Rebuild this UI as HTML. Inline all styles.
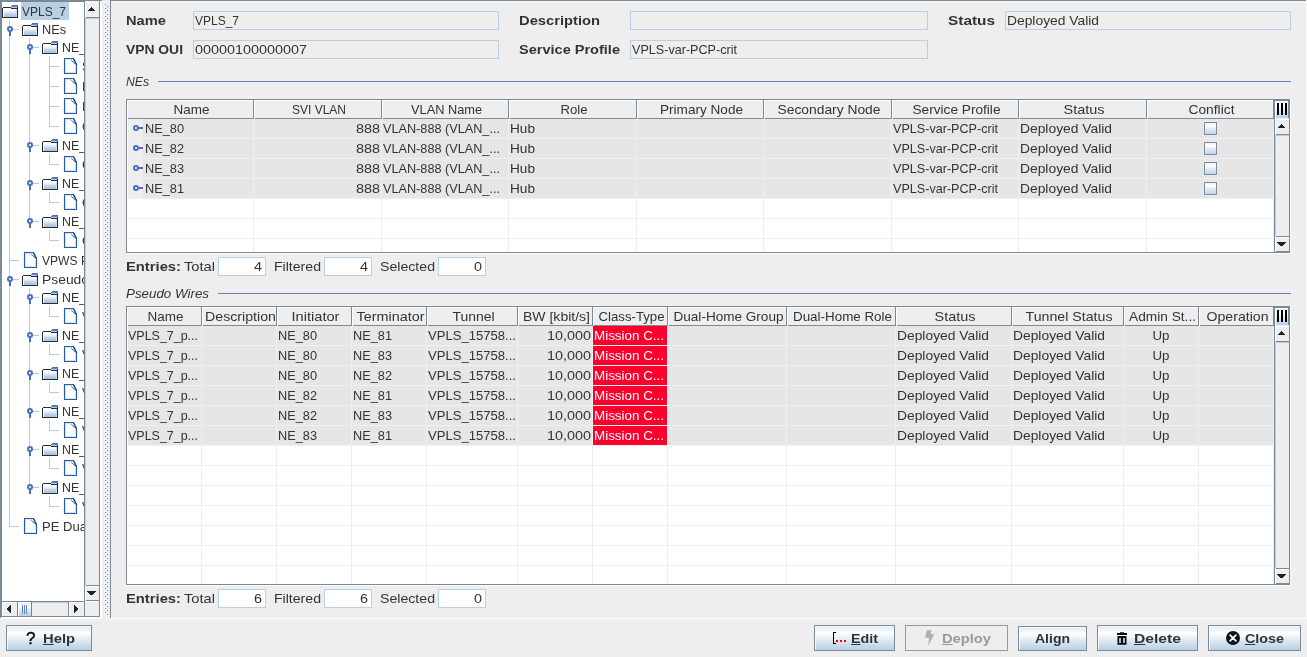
<!DOCTYPE html><html><head><meta charset="utf-8"><title>VPLS_7</title><style>
html,body{margin:0;padding:0}
body{width:1307px;height:657px;background:#eeeeee;position:relative;overflow:hidden;font-family:"Liberation Sans",sans-serif;font-size:13px;color:#333333}
.a{position:absolute;box-sizing:border-box}
.t{position:absolute;white-space:nowrap;line-height:16px;height:16px;transform-origin:0 50%}
.tc{transform-origin:50% 50%;text-align:center}
.tr{transform-origin:100% 50%;text-align:right}
.b{font-weight:bold}
.i{font-style:italic}
.u{text-decoration:underline}
.fld{border:1px solid #b8cfe5;background:#eeeeee}
.wf{border:1px solid #b8cfe5;background:#ffffff}
.btn{border:1px solid #7a8a99;background:linear-gradient(#dde8f3 0%,#ffffff 30%,#dde8f3 60%,#b8cfe5 100%);box-shadow:inset 1px 1px 0 rgba(255,255,255,0.8)}
svg{position:absolute;overflow:visible}
</style></head><body><div id="root" style="position:absolute;left:0;top:0;width:1307px;height:657px;will-change:transform">
<svg style="left:0;top:0" width="0" height="0"><defs><linearGradient id="fg" x1="0" y1="0" x2="0" y2="1"><stop offset="0" stop-color="#ffffff"/><stop offset="0.15" stop-color="#fbfcfe"/><stop offset="0.75" stop-color="#b4cbe6"/><stop offset="1" stop-color="#a9c3e1"/></linearGradient></defs></svg>
<div class="a " style="left:0px;top:0px;width:102px;height:1px;background:#7a8a99"></div>
<div class="a " style="left:0px;top:0px;width:2px;height:617px;background:#7a8a99"></div>
<div class="a " style="left:0px;top:617px;width:1px;height:1px;background:#7a8a99"></div>
<div class="a " style="left:1px;top:1px;width:99px;height:1px;background:#7a8a99"></div>
<div class="a " style="left:99px;top:1px;width:1px;height:616px;background:#7a8a99"></div>
<div class="a " style="left:2px;top:616px;width:98px;height:1px;background:#7a8a99"></div>
<div class="a " style="left:100px;top:1px;width:2px;height:618px;background:#ffffff"></div>
<div class="a " style="left:1px;top:617px;width:101px;height:1px;background:#ffffff"></div>
<div class="a " style="left:0px;top:618px;width:102px;height:1px;background:#ffffff"></div>
<div class="a" style="left:2px;top:2px;width:82px;height:599px;background:#ffffff;overflow:hidden">
<div class="a " style="left:7px;top:18px;width:1px;height:507px;background:#b3cbe6"></div>
<div class="a " style="left:27px;top:36px;width:1px;height:184px;background:#b3cbe6"></div>
<div class="a " style="left:47px;top:54px;width:1px;height:71px;background:#b3cbe6"></div>
<div class="a " style="left:47px;top:152px;width:1px;height:11px;background:#b3cbe6"></div>
<div class="a " style="left:47px;top:190px;width:1px;height:11px;background:#b3cbe6"></div>
<div class="a " style="left:47px;top:228px;width:1px;height:11px;background:#b3cbe6"></div>
<div class="a " style="left:27px;top:286px;width:1px;height:200px;background:#b3cbe6"></div>
<div class="a " style="left:47px;top:304px;width:1px;height:11px;background:#b3cbe6"></div>
<div class="a " style="left:47px;top:342px;width:1px;height:11px;background:#b3cbe6"></div>
<div class="a " style="left:47px;top:380px;width:1px;height:11px;background:#b3cbe6"></div>
<div class="a " style="left:47px;top:418px;width:1px;height:11px;background:#b3cbe6"></div>
<div class="a " style="left:47px;top:456px;width:1px;height:11px;background:#b3cbe6"></div>
<div class="a " style="left:47px;top:494px;width:1px;height:11px;background:#b3cbe6"></div>
<svg style="left:0px;top:3px" width="16" height="13" viewBox="0 0 16 13" shape-rendering="crispEdges"><rect x="1" y="3" width="14" height="9" fill="#ffffff"/><rect x="2" y="4" width="12" height="8" fill="url(#fg)"/><rect x="14" y="4" width="1" height="8" fill="#cfe0f3"/><rect x="10" y="0" width="6" height="1" fill="#4a70c4"/><rect x="9" y="1" width="7" height="1" fill="#5f86d0"/><rect x="9" y="2" width="6" height="1" fill="#b4cbea"/><rect x="1" y="2" width="8" height="1" fill="#2b2b2b"/><rect x="9" y="3" width="6" height="1" fill="#2b2b2b"/><rect x="0" y="3" width="1" height="10" fill="#2b2b2b"/><rect x="15" y="2" width="1" height="11" fill="#2b2b2b"/><rect x="0" y="12" width="16" height="1" fill="#2b2b2b"/></svg>
<div class="a " style="left:19px;top:0px;width:48px;height:18px;background:#b8cfe5"></div>
<div class="t " style="left:19.5px;top:2px;;transform:scaleX(0.9224)">VPLS_7</div>
<div class="a " style="left:11px;top:27px;width:6px;height:1px;background:#b3cbe6"></div>
<svg style="left:20px;top:21px" width="16" height="13" viewBox="0 0 16 13" shape-rendering="crispEdges"><rect x="1" y="3" width="14" height="9" fill="#ffffff"/><rect x="2" y="4" width="12" height="8" fill="url(#fg)"/><rect x="14" y="4" width="1" height="8" fill="#cfe0f3"/><rect x="10" y="0" width="6" height="1" fill="#4a70c4"/><rect x="9" y="1" width="7" height="1" fill="#5f86d0"/><rect x="9" y="2" width="6" height="1" fill="#b4cbea"/><rect x="1" y="2" width="8" height="1" fill="#2b2b2b"/><rect x="9" y="3" width="6" height="1" fill="#2b2b2b"/><rect x="0" y="3" width="1" height="10" fill="#2b2b2b"/><rect x="15" y="2" width="1" height="11" fill="#2b2b2b"/><rect x="0" y="12" width="16" height="1" fill="#2b2b2b"/></svg>
<svg style="left:5px;top:24px" width="6" height="10" viewBox="0 0 6 10"><circle cx="3" cy="3" r="2" fill="#ffffff" stroke="#4a6fc0" stroke-width="2"/><rect x="2" y="5.6" width="2" height="4.4" fill="#4a6fc0"/></svg>
<div class="t " style="left:39.5px;top:20px;;transform:scaleX(0.9771)">NEs</div>
<div class="a " style="left:31px;top:45px;width:6px;height:1px;background:#b3cbe6"></div>
<svg style="left:40px;top:39px" width="16" height="13" viewBox="0 0 16 13" shape-rendering="crispEdges"><rect x="1" y="3" width="14" height="9" fill="#ffffff"/><rect x="2" y="4" width="12" height="8" fill="url(#fg)"/><rect x="14" y="4" width="1" height="8" fill="#cfe0f3"/><rect x="10" y="0" width="6" height="1" fill="#4a70c4"/><rect x="9" y="1" width="7" height="1" fill="#5f86d0"/><rect x="9" y="2" width="6" height="1" fill="#b4cbea"/><rect x="1" y="2" width="8" height="1" fill="#2b2b2b"/><rect x="9" y="3" width="6" height="1" fill="#2b2b2b"/><rect x="0" y="3" width="1" height="10" fill="#2b2b2b"/><rect x="15" y="2" width="1" height="11" fill="#2b2b2b"/><rect x="0" y="12" width="16" height="1" fill="#2b2b2b"/></svg>
<svg style="left:25px;top:42px" width="6" height="10" viewBox="0 0 6 10"><circle cx="3" cy="3" r="2" fill="#ffffff" stroke="#4a6fc0" stroke-width="2"/><rect x="2" y="5.6" width="2" height="4.4" fill="#4a6fc0"/></svg>
<div class="t " style="left:59.5px;top:38px;;transform:scaleX(0.9529)">NE_8</div>
<div class="a " style="left:48px;top:64px;width:9px;height:1px;background:#b3cbe6"></div>
<svg style="left:62px;top:56px" width="13" height="16" viewBox="0 0 13 16"><path d="M0.5 0.5 L9.5 0.5 L12.5 6.6 L12.5 15.5 L0.5 15.5 Z" fill="#fdfdfb" stroke="#2b5e9e" stroke-width="1.15"/><path d="M1.5 1.5 L8 1.5 M1.5 1.5 L1.5 14.5 L11.5 14.5 L11.5 7.5" fill="none" stroke="#d3e2f3" stroke-width="1"/><path d="M7.2 2.4 L11.3 6.0" fill="none" stroke="#4a78b4" stroke-width="1"/><path d="M9.3 0.5 L12.5 6.6" fill="none" stroke="#1f4f94" stroke-width="1.35"/></svg>
<div class="t " style="left:79.5px;top:57px;;transform:scaleX(0.9225)">SV</div>
<div class="a " style="left:48px;top:84px;width:9px;height:1px;background:#b3cbe6"></div>
<svg style="left:62px;top:76px" width="13" height="16" viewBox="0 0 13 16"><path d="M0.5 0.5 L9.5 0.5 L12.5 6.6 L12.5 15.5 L0.5 15.5 Z" fill="#fdfdfb" stroke="#2b5e9e" stroke-width="1.15"/><path d="M1.5 1.5 L8 1.5 M1.5 1.5 L1.5 14.5 L11.5 14.5 L11.5 7.5" fill="none" stroke="#d3e2f3" stroke-width="1"/><path d="M7.2 2.4 L11.3 6.0" fill="none" stroke="#4a78b4" stroke-width="1"/><path d="M9.3 0.5 L12.5 6.6" fill="none" stroke="#1f4f94" stroke-width="1.35"/></svg>
<div class="t " style="left:79.5px;top:77px;;transform:scaleX(1.0059)">Po</div>
<div class="a " style="left:48px;top:104px;width:9px;height:1px;background:#b3cbe6"></div>
<svg style="left:62px;top:96px" width="13" height="16" viewBox="0 0 13 16"><path d="M0.5 0.5 L9.5 0.5 L12.5 6.6 L12.5 15.5 L0.5 15.5 Z" fill="#fdfdfb" stroke="#2b5e9e" stroke-width="1.15"/><path d="M1.5 1.5 L8 1.5 M1.5 1.5 L1.5 14.5 L11.5 14.5 L11.5 7.5" fill="none" stroke="#d3e2f3" stroke-width="1"/><path d="M7.2 2.4 L11.3 6.0" fill="none" stroke="#4a78b4" stroke-width="1"/><path d="M9.3 0.5 L12.5 6.6" fill="none" stroke="#1f4f94" stroke-width="1.35"/></svg>
<div class="t " style="left:79.5px;top:97px;;transform:scaleX(1.0059)">Po</div>
<div class="a " style="left:48px;top:124px;width:9px;height:1px;background:#b3cbe6"></div>
<svg style="left:62px;top:116px" width="13" height="16" viewBox="0 0 13 16"><path d="M0.5 0.5 L9.5 0.5 L12.5 6.6 L12.5 15.5 L0.5 15.5 Z" fill="#fdfdfb" stroke="#2b5e9e" stroke-width="1.15"/><path d="M1.5 1.5 L8 1.5 M1.5 1.5 L1.5 14.5 L11.5 14.5 L11.5 7.5" fill="none" stroke="#d3e2f3" stroke-width="1"/><path d="M7.2 2.4 L11.3 6.0" fill="none" stroke="#4a78b4" stroke-width="1"/><path d="M9.3 0.5 L12.5 6.6" fill="none" stroke="#1f4f94" stroke-width="1.35"/></svg>
<div class="t " style="left:79.5px;top:117px;;transform:scaleX(0.9802)">Qo</div>
<div class="a " style="left:31px;top:143px;width:6px;height:1px;background:#b3cbe6"></div>
<svg style="left:40px;top:137px" width="16" height="13" viewBox="0 0 16 13" shape-rendering="crispEdges"><rect x="1" y="3" width="14" height="9" fill="#ffffff"/><rect x="2" y="4" width="12" height="8" fill="url(#fg)"/><rect x="14" y="4" width="1" height="8" fill="#cfe0f3"/><rect x="10" y="0" width="6" height="1" fill="#4a70c4"/><rect x="9" y="1" width="7" height="1" fill="#5f86d0"/><rect x="9" y="2" width="6" height="1" fill="#b4cbea"/><rect x="1" y="2" width="8" height="1" fill="#2b2b2b"/><rect x="9" y="3" width="6" height="1" fill="#2b2b2b"/><rect x="0" y="3" width="1" height="10" fill="#2b2b2b"/><rect x="15" y="2" width="1" height="11" fill="#2b2b2b"/><rect x="0" y="12" width="16" height="1" fill="#2b2b2b"/></svg>
<svg style="left:25px;top:140px" width="6" height="10" viewBox="0 0 6 10"><circle cx="3" cy="3" r="2" fill="#ffffff" stroke="#4a6fc0" stroke-width="2"/><rect x="2" y="5.6" width="2" height="4.4" fill="#4a6fc0"/></svg>
<div class="t " style="left:59.5px;top:136px;;transform:scaleX(0.9529)">NE_8</div>
<div class="a " style="left:48px;top:162px;width:9px;height:1px;background:#b3cbe6"></div>
<svg style="left:62px;top:154px" width="13" height="16" viewBox="0 0 13 16"><path d="M0.5 0.5 L9.5 0.5 L12.5 6.6 L12.5 15.5 L0.5 15.5 Z" fill="#fdfdfb" stroke="#2b5e9e" stroke-width="1.15"/><path d="M1.5 1.5 L8 1.5 M1.5 1.5 L1.5 14.5 L11.5 14.5 L11.5 7.5" fill="none" stroke="#d3e2f3" stroke-width="1"/><path d="M7.2 2.4 L11.3 6.0" fill="none" stroke="#4a78b4" stroke-width="1"/><path d="M9.3 0.5 L12.5 6.6" fill="none" stroke="#1f4f94" stroke-width="1.35"/></svg>
<div class="t " style="left:79.5px;top:155px;;transform:scaleX(0.9802)">Qo</div>
<div class="a " style="left:31px;top:181px;width:6px;height:1px;background:#b3cbe6"></div>
<svg style="left:40px;top:175px" width="16" height="13" viewBox="0 0 16 13" shape-rendering="crispEdges"><rect x="1" y="3" width="14" height="9" fill="#ffffff"/><rect x="2" y="4" width="12" height="8" fill="url(#fg)"/><rect x="14" y="4" width="1" height="8" fill="#cfe0f3"/><rect x="10" y="0" width="6" height="1" fill="#4a70c4"/><rect x="9" y="1" width="7" height="1" fill="#5f86d0"/><rect x="9" y="2" width="6" height="1" fill="#b4cbea"/><rect x="1" y="2" width="8" height="1" fill="#2b2b2b"/><rect x="9" y="3" width="6" height="1" fill="#2b2b2b"/><rect x="0" y="3" width="1" height="10" fill="#2b2b2b"/><rect x="15" y="2" width="1" height="11" fill="#2b2b2b"/><rect x="0" y="12" width="16" height="1" fill="#2b2b2b"/></svg>
<svg style="left:25px;top:178px" width="6" height="10" viewBox="0 0 6 10"><circle cx="3" cy="3" r="2" fill="#ffffff" stroke="#4a6fc0" stroke-width="2"/><rect x="2" y="5.6" width="2" height="4.4" fill="#4a6fc0"/></svg>
<div class="t " style="left:59.5px;top:174px;;transform:scaleX(0.9529)">NE_8</div>
<div class="a " style="left:48px;top:200px;width:9px;height:1px;background:#b3cbe6"></div>
<svg style="left:62px;top:192px" width="13" height="16" viewBox="0 0 13 16"><path d="M0.5 0.5 L9.5 0.5 L12.5 6.6 L12.5 15.5 L0.5 15.5 Z" fill="#fdfdfb" stroke="#2b5e9e" stroke-width="1.15"/><path d="M1.5 1.5 L8 1.5 M1.5 1.5 L1.5 14.5 L11.5 14.5 L11.5 7.5" fill="none" stroke="#d3e2f3" stroke-width="1"/><path d="M7.2 2.4 L11.3 6.0" fill="none" stroke="#4a78b4" stroke-width="1"/><path d="M9.3 0.5 L12.5 6.6" fill="none" stroke="#1f4f94" stroke-width="1.35"/></svg>
<div class="t " style="left:79.5px;top:193px;;transform:scaleX(0.9802)">Qo</div>
<div class="a " style="left:31px;top:219px;width:6px;height:1px;background:#b3cbe6"></div>
<svg style="left:40px;top:213px" width="16" height="13" viewBox="0 0 16 13" shape-rendering="crispEdges"><rect x="1" y="3" width="14" height="9" fill="#ffffff"/><rect x="2" y="4" width="12" height="8" fill="url(#fg)"/><rect x="14" y="4" width="1" height="8" fill="#cfe0f3"/><rect x="10" y="0" width="6" height="1" fill="#4a70c4"/><rect x="9" y="1" width="7" height="1" fill="#5f86d0"/><rect x="9" y="2" width="6" height="1" fill="#b4cbea"/><rect x="1" y="2" width="8" height="1" fill="#2b2b2b"/><rect x="9" y="3" width="6" height="1" fill="#2b2b2b"/><rect x="0" y="3" width="1" height="10" fill="#2b2b2b"/><rect x="15" y="2" width="1" height="11" fill="#2b2b2b"/><rect x="0" y="12" width="16" height="1" fill="#2b2b2b"/></svg>
<svg style="left:25px;top:216px" width="6" height="10" viewBox="0 0 6 10"><circle cx="3" cy="3" r="2" fill="#ffffff" stroke="#4a6fc0" stroke-width="2"/><rect x="2" y="5.6" width="2" height="4.4" fill="#4a6fc0"/></svg>
<div class="t " style="left:59.5px;top:212px;;transform:scaleX(0.9529)">NE_8</div>
<div class="a " style="left:48px;top:238px;width:9px;height:1px;background:#b3cbe6"></div>
<svg style="left:62px;top:230px" width="13" height="16" viewBox="0 0 13 16"><path d="M0.5 0.5 L9.5 0.5 L12.5 6.6 L12.5 15.5 L0.5 15.5 Z" fill="#fdfdfb" stroke="#2b5e9e" stroke-width="1.15"/><path d="M1.5 1.5 L8 1.5 M1.5 1.5 L1.5 14.5 L11.5 14.5 L11.5 7.5" fill="none" stroke="#d3e2f3" stroke-width="1"/><path d="M7.2 2.4 L11.3 6.0" fill="none" stroke="#4a78b4" stroke-width="1"/><path d="M9.3 0.5 L12.5 6.6" fill="none" stroke="#1f4f94" stroke-width="1.35"/></svg>
<div class="t " style="left:79.5px;top:231px;;transform:scaleX(0.9802)">Qo</div>
<div class="a " style="left:8px;top:258px;width:9px;height:1px;background:#b3cbe6"></div>
<svg style="left:22px;top:250px" width="13" height="16" viewBox="0 0 13 16"><path d="M0.5 0.5 L9.5 0.5 L12.5 6.6 L12.5 15.5 L0.5 15.5 Z" fill="#fdfdfb" stroke="#2b5e9e" stroke-width="1.15"/><path d="M1.5 1.5 L8 1.5 M1.5 1.5 L1.5 14.5 L11.5 14.5 L11.5 7.5" fill="none" stroke="#d3e2f3" stroke-width="1"/><path d="M7.2 2.4 L11.3 6.0" fill="none" stroke="#4a78b4" stroke-width="1"/><path d="M9.3 0.5 L12.5 6.6" fill="none" stroke="#1f4f94" stroke-width="1.35"/></svg>
<div class="t " style="left:39.5px;top:251px;;transform:scaleX(0.9293)">VPWS P</div>
<div class="a " style="left:11px;top:277px;width:6px;height:1px;background:#b3cbe6"></div>
<svg style="left:20px;top:271px" width="16" height="13" viewBox="0 0 16 13" shape-rendering="crispEdges"><rect x="1" y="3" width="14" height="9" fill="#ffffff"/><rect x="2" y="4" width="12" height="8" fill="url(#fg)"/><rect x="14" y="4" width="1" height="8" fill="#cfe0f3"/><rect x="10" y="0" width="6" height="1" fill="#4a70c4"/><rect x="9" y="1" width="7" height="1" fill="#5f86d0"/><rect x="9" y="2" width="6" height="1" fill="#b4cbea"/><rect x="1" y="2" width="8" height="1" fill="#2b2b2b"/><rect x="9" y="3" width="6" height="1" fill="#2b2b2b"/><rect x="0" y="3" width="1" height="10" fill="#2b2b2b"/><rect x="15" y="2" width="1" height="11" fill="#2b2b2b"/><rect x="0" y="12" width="16" height="1" fill="#2b2b2b"/></svg>
<svg style="left:5px;top:274px" width="6" height="10" viewBox="0 0 6 10"><circle cx="3" cy="3" r="2" fill="#ffffff" stroke="#4a6fc0" stroke-width="2"/><rect x="2" y="5.6" width="2" height="4.4" fill="#4a6fc0"/></svg>
<div class="t " style="left:39.5px;top:270px;;transform:scaleX(1.0659)">Pseudo</div>
<div class="a " style="left:31px;top:295px;width:6px;height:1px;background:#b3cbe6"></div>
<svg style="left:40px;top:289px" width="16" height="13" viewBox="0 0 16 13" shape-rendering="crispEdges"><rect x="1" y="3" width="14" height="9" fill="#ffffff"/><rect x="2" y="4" width="12" height="8" fill="url(#fg)"/><rect x="14" y="4" width="1" height="8" fill="#cfe0f3"/><rect x="10" y="0" width="6" height="1" fill="#4a70c4"/><rect x="9" y="1" width="7" height="1" fill="#5f86d0"/><rect x="9" y="2" width="6" height="1" fill="#b4cbea"/><rect x="1" y="2" width="8" height="1" fill="#2b2b2b"/><rect x="9" y="3" width="6" height="1" fill="#2b2b2b"/><rect x="0" y="3" width="1" height="10" fill="#2b2b2b"/><rect x="15" y="2" width="1" height="11" fill="#2b2b2b"/><rect x="0" y="12" width="16" height="1" fill="#2b2b2b"/></svg>
<svg style="left:25px;top:292px" width="6" height="10" viewBox="0 0 6 10"><circle cx="3" cy="3" r="2" fill="#ffffff" stroke="#4a6fc0" stroke-width="2"/><rect x="2" y="5.6" width="2" height="4.4" fill="#4a6fc0"/></svg>
<div class="t " style="left:59.5px;top:288px;;transform:scaleX(0.9529)">NE_8</div>
<div class="a " style="left:48px;top:314px;width:9px;height:1px;background:#b3cbe6"></div>
<svg style="left:62px;top:306px" width="13" height="16" viewBox="0 0 13 16"><path d="M0.5 0.5 L9.5 0.5 L12.5 6.6 L12.5 15.5 L0.5 15.5 Z" fill="#fdfdfb" stroke="#2b5e9e" stroke-width="1.15"/><path d="M1.5 1.5 L8 1.5 M1.5 1.5 L1.5 14.5 L11.5 14.5 L11.5 7.5" fill="none" stroke="#d3e2f3" stroke-width="1"/><path d="M7.2 2.4 L11.3 6.0" fill="none" stroke="#4a78b4" stroke-width="1"/><path d="M9.3 0.5 L12.5 6.6" fill="none" stroke="#1f4f94" stroke-width="1.35"/></svg>
<div class="t " style="left:79.5px;top:307px;;transform:scaleX(0.9225)">VP</div>
<div class="a " style="left:31px;top:333px;width:6px;height:1px;background:#b3cbe6"></div>
<svg style="left:40px;top:327px" width="16" height="13" viewBox="0 0 16 13" shape-rendering="crispEdges"><rect x="1" y="3" width="14" height="9" fill="#ffffff"/><rect x="2" y="4" width="12" height="8" fill="url(#fg)"/><rect x="14" y="4" width="1" height="8" fill="#cfe0f3"/><rect x="10" y="0" width="6" height="1" fill="#4a70c4"/><rect x="9" y="1" width="7" height="1" fill="#5f86d0"/><rect x="9" y="2" width="6" height="1" fill="#b4cbea"/><rect x="1" y="2" width="8" height="1" fill="#2b2b2b"/><rect x="9" y="3" width="6" height="1" fill="#2b2b2b"/><rect x="0" y="3" width="1" height="10" fill="#2b2b2b"/><rect x="15" y="2" width="1" height="11" fill="#2b2b2b"/><rect x="0" y="12" width="16" height="1" fill="#2b2b2b"/></svg>
<svg style="left:25px;top:330px" width="6" height="10" viewBox="0 0 6 10"><circle cx="3" cy="3" r="2" fill="#ffffff" stroke="#4a6fc0" stroke-width="2"/><rect x="2" y="5.6" width="2" height="4.4" fill="#4a6fc0"/></svg>
<div class="t " style="left:59.5px;top:326px;;transform:scaleX(0.9529)">NE_8</div>
<div class="a " style="left:48px;top:352px;width:9px;height:1px;background:#b3cbe6"></div>
<svg style="left:62px;top:344px" width="13" height="16" viewBox="0 0 13 16"><path d="M0.5 0.5 L9.5 0.5 L12.5 6.6 L12.5 15.5 L0.5 15.5 Z" fill="#fdfdfb" stroke="#2b5e9e" stroke-width="1.15"/><path d="M1.5 1.5 L8 1.5 M1.5 1.5 L1.5 14.5 L11.5 14.5 L11.5 7.5" fill="none" stroke="#d3e2f3" stroke-width="1"/><path d="M7.2 2.4 L11.3 6.0" fill="none" stroke="#4a78b4" stroke-width="1"/><path d="M9.3 0.5 L12.5 6.6" fill="none" stroke="#1f4f94" stroke-width="1.35"/></svg>
<div class="t " style="left:79.5px;top:345px;;transform:scaleX(0.9225)">VP</div>
<div class="a " style="left:31px;top:371px;width:6px;height:1px;background:#b3cbe6"></div>
<svg style="left:40px;top:365px" width="16" height="13" viewBox="0 0 16 13" shape-rendering="crispEdges"><rect x="1" y="3" width="14" height="9" fill="#ffffff"/><rect x="2" y="4" width="12" height="8" fill="url(#fg)"/><rect x="14" y="4" width="1" height="8" fill="#cfe0f3"/><rect x="10" y="0" width="6" height="1" fill="#4a70c4"/><rect x="9" y="1" width="7" height="1" fill="#5f86d0"/><rect x="9" y="2" width="6" height="1" fill="#b4cbea"/><rect x="1" y="2" width="8" height="1" fill="#2b2b2b"/><rect x="9" y="3" width="6" height="1" fill="#2b2b2b"/><rect x="0" y="3" width="1" height="10" fill="#2b2b2b"/><rect x="15" y="2" width="1" height="11" fill="#2b2b2b"/><rect x="0" y="12" width="16" height="1" fill="#2b2b2b"/></svg>
<svg style="left:25px;top:368px" width="6" height="10" viewBox="0 0 6 10"><circle cx="3" cy="3" r="2" fill="#ffffff" stroke="#4a6fc0" stroke-width="2"/><rect x="2" y="5.6" width="2" height="4.4" fill="#4a6fc0"/></svg>
<div class="t " style="left:59.5px;top:364px;;transform:scaleX(0.9529)">NE_8</div>
<div class="a " style="left:48px;top:390px;width:9px;height:1px;background:#b3cbe6"></div>
<svg style="left:62px;top:382px" width="13" height="16" viewBox="0 0 13 16"><path d="M0.5 0.5 L9.5 0.5 L12.5 6.6 L12.5 15.5 L0.5 15.5 Z" fill="#fdfdfb" stroke="#2b5e9e" stroke-width="1.15"/><path d="M1.5 1.5 L8 1.5 M1.5 1.5 L1.5 14.5 L11.5 14.5 L11.5 7.5" fill="none" stroke="#d3e2f3" stroke-width="1"/><path d="M7.2 2.4 L11.3 6.0" fill="none" stroke="#4a78b4" stroke-width="1"/><path d="M9.3 0.5 L12.5 6.6" fill="none" stroke="#1f4f94" stroke-width="1.35"/></svg>
<div class="t " style="left:79.5px;top:383px;;transform:scaleX(0.9225)">VP</div>
<div class="a " style="left:31px;top:409px;width:6px;height:1px;background:#b3cbe6"></div>
<svg style="left:40px;top:403px" width="16" height="13" viewBox="0 0 16 13" shape-rendering="crispEdges"><rect x="1" y="3" width="14" height="9" fill="#ffffff"/><rect x="2" y="4" width="12" height="8" fill="url(#fg)"/><rect x="14" y="4" width="1" height="8" fill="#cfe0f3"/><rect x="10" y="0" width="6" height="1" fill="#4a70c4"/><rect x="9" y="1" width="7" height="1" fill="#5f86d0"/><rect x="9" y="2" width="6" height="1" fill="#b4cbea"/><rect x="1" y="2" width="8" height="1" fill="#2b2b2b"/><rect x="9" y="3" width="6" height="1" fill="#2b2b2b"/><rect x="0" y="3" width="1" height="10" fill="#2b2b2b"/><rect x="15" y="2" width="1" height="11" fill="#2b2b2b"/><rect x="0" y="12" width="16" height="1" fill="#2b2b2b"/></svg>
<svg style="left:25px;top:406px" width="6" height="10" viewBox="0 0 6 10"><circle cx="3" cy="3" r="2" fill="#ffffff" stroke="#4a6fc0" stroke-width="2"/><rect x="2" y="5.6" width="2" height="4.4" fill="#4a6fc0"/></svg>
<div class="t " style="left:59.5px;top:402px;;transform:scaleX(0.9529)">NE_8</div>
<div class="a " style="left:48px;top:428px;width:9px;height:1px;background:#b3cbe6"></div>
<svg style="left:62px;top:420px" width="13" height="16" viewBox="0 0 13 16"><path d="M0.5 0.5 L9.5 0.5 L12.5 6.6 L12.5 15.5 L0.5 15.5 Z" fill="#fdfdfb" stroke="#2b5e9e" stroke-width="1.15"/><path d="M1.5 1.5 L8 1.5 M1.5 1.5 L1.5 14.5 L11.5 14.5 L11.5 7.5" fill="none" stroke="#d3e2f3" stroke-width="1"/><path d="M7.2 2.4 L11.3 6.0" fill="none" stroke="#4a78b4" stroke-width="1"/><path d="M9.3 0.5 L12.5 6.6" fill="none" stroke="#1f4f94" stroke-width="1.35"/></svg>
<div class="t " style="left:79.5px;top:421px;;transform:scaleX(0.9225)">VP</div>
<div class="a " style="left:31px;top:447px;width:6px;height:1px;background:#b3cbe6"></div>
<svg style="left:40px;top:441px" width="16" height="13" viewBox="0 0 16 13" shape-rendering="crispEdges"><rect x="1" y="3" width="14" height="9" fill="#ffffff"/><rect x="2" y="4" width="12" height="8" fill="url(#fg)"/><rect x="14" y="4" width="1" height="8" fill="#cfe0f3"/><rect x="10" y="0" width="6" height="1" fill="#4a70c4"/><rect x="9" y="1" width="7" height="1" fill="#5f86d0"/><rect x="9" y="2" width="6" height="1" fill="#b4cbea"/><rect x="1" y="2" width="8" height="1" fill="#2b2b2b"/><rect x="9" y="3" width="6" height="1" fill="#2b2b2b"/><rect x="0" y="3" width="1" height="10" fill="#2b2b2b"/><rect x="15" y="2" width="1" height="11" fill="#2b2b2b"/><rect x="0" y="12" width="16" height="1" fill="#2b2b2b"/></svg>
<svg style="left:25px;top:444px" width="6" height="10" viewBox="0 0 6 10"><circle cx="3" cy="3" r="2" fill="#ffffff" stroke="#4a6fc0" stroke-width="2"/><rect x="2" y="5.6" width="2" height="4.4" fill="#4a6fc0"/></svg>
<div class="t " style="left:59.5px;top:440px;;transform:scaleX(0.9529)">NE_8</div>
<div class="a " style="left:48px;top:466px;width:9px;height:1px;background:#b3cbe6"></div>
<svg style="left:62px;top:458px" width="13" height="16" viewBox="0 0 13 16"><path d="M0.5 0.5 L9.5 0.5 L12.5 6.6 L12.5 15.5 L0.5 15.5 Z" fill="#fdfdfb" stroke="#2b5e9e" stroke-width="1.15"/><path d="M1.5 1.5 L8 1.5 M1.5 1.5 L1.5 14.5 L11.5 14.5 L11.5 7.5" fill="none" stroke="#d3e2f3" stroke-width="1"/><path d="M7.2 2.4 L11.3 6.0" fill="none" stroke="#4a78b4" stroke-width="1"/><path d="M9.3 0.5 L12.5 6.6" fill="none" stroke="#1f4f94" stroke-width="1.35"/></svg>
<div class="t " style="left:79.5px;top:459px;;transform:scaleX(0.9225)">VP</div>
<div class="a " style="left:31px;top:485px;width:6px;height:1px;background:#b3cbe6"></div>
<svg style="left:40px;top:479px" width="16" height="13" viewBox="0 0 16 13" shape-rendering="crispEdges"><rect x="1" y="3" width="14" height="9" fill="#ffffff"/><rect x="2" y="4" width="12" height="8" fill="url(#fg)"/><rect x="14" y="4" width="1" height="8" fill="#cfe0f3"/><rect x="10" y="0" width="6" height="1" fill="#4a70c4"/><rect x="9" y="1" width="7" height="1" fill="#5f86d0"/><rect x="9" y="2" width="6" height="1" fill="#b4cbea"/><rect x="1" y="2" width="8" height="1" fill="#2b2b2b"/><rect x="9" y="3" width="6" height="1" fill="#2b2b2b"/><rect x="0" y="3" width="1" height="10" fill="#2b2b2b"/><rect x="15" y="2" width="1" height="11" fill="#2b2b2b"/><rect x="0" y="12" width="16" height="1" fill="#2b2b2b"/></svg>
<svg style="left:25px;top:482px" width="6" height="10" viewBox="0 0 6 10"><circle cx="3" cy="3" r="2" fill="#ffffff" stroke="#4a6fc0" stroke-width="2"/><rect x="2" y="5.6" width="2" height="4.4" fill="#4a6fc0"/></svg>
<div class="t " style="left:59.5px;top:478px;;transform:scaleX(0.9529)">NE_8</div>
<div class="a " style="left:48px;top:504px;width:9px;height:1px;background:#b3cbe6"></div>
<svg style="left:62px;top:496px" width="13" height="16" viewBox="0 0 13 16"><path d="M0.5 0.5 L9.5 0.5 L12.5 6.6 L12.5 15.5 L0.5 15.5 Z" fill="#fdfdfb" stroke="#2b5e9e" stroke-width="1.15"/><path d="M1.5 1.5 L8 1.5 M1.5 1.5 L1.5 14.5 L11.5 14.5 L11.5 7.5" fill="none" stroke="#d3e2f3" stroke-width="1"/><path d="M7.2 2.4 L11.3 6.0" fill="none" stroke="#4a78b4" stroke-width="1"/><path d="M9.3 0.5 L12.5 6.6" fill="none" stroke="#1f4f94" stroke-width="1.35"/></svg>
<div class="t " style="left:79.5px;top:497px;;transform:scaleX(0.9225)">VP</div>
<div class="a " style="left:8px;top:524px;width:9px;height:1px;background:#b3cbe6"></div>
<svg style="left:22px;top:516px" width="13" height="16" viewBox="0 0 13 16"><path d="M0.5 0.5 L9.5 0.5 L12.5 6.6 L12.5 15.5 L0.5 15.5 Z" fill="#fdfdfb" stroke="#2b5e9e" stroke-width="1.15"/><path d="M1.5 1.5 L8 1.5 M1.5 1.5 L1.5 14.5 L11.5 14.5 L11.5 7.5" fill="none" stroke="#d3e2f3" stroke-width="1"/><path d="M7.2 2.4 L11.3 6.0" fill="none" stroke="#4a78b4" stroke-width="1"/><path d="M9.3 0.5 L12.5 6.6" fill="none" stroke="#1f4f94" stroke-width="1.35"/></svg>
<div class="t " style="left:39.5px;top:517px;;transform:scaleX(1.0042)">PE Dua</div>
</div>
<div class="a " style="left:84px;top:1px;width:15px;height:600px;background:#eeeeee"></div>
<div class="a " style="left:84px;top:1px;width:1px;height:600px;background:#7a8a99"></div>
<div class="a " style="left:85px;top:2px;width:14px;height:1px;background:#ffffff"></div>
<div class="a " style="left:85px;top:2px;width:1px;height:15px;background:#ffffff"></div>
<div class="a " style="left:86px;top:17px;width:13px;height:1px;background:#7a8a99"></div>
<div class="a " style="left:91px;top:7px;width:1px;height:1px;background:#222222"></div>
<div class="a " style="left:90px;top:8px;width:3px;height:1px;background:#222222"></div>
<div class="a " style="left:89px;top:9px;width:5px;height:1px;background:#222222"></div>
<div class="a " style="left:88px;top:10px;width:7px;height:1px;background:#222222"></div>
<div class="a " style="left:85px;top:18px;width:14px;height:1px;background:#b8cfe5"></div>
<div class="a " style="left:85px;top:18px;width:1px;height:567px;background:#b8cfe5"></div>
<div class="a " style="left:86px;top:585px;width:13px;height:1px;background:#7a8a99"></div>
<div class="a " style="left:85px;top:586px;width:14px;height:1px;background:#ffffff"></div>
<div class="a " style="left:85px;top:586px;width:1px;height:14px;background:#ffffff"></div>
<div class="a " style="left:86px;top:600px;width:13px;height:1px;background:#7a8a99"></div>
<div class="a " style="left:87px;top:591px;width:9px;height:1px;background:#222222"></div>
<div class="a " style="left:88px;top:592px;width:7px;height:1px;background:#222222"></div>
<div class="a " style="left:89px;top:593px;width:5px;height:1px;background:#222222"></div>
<div class="a " style="left:90px;top:594px;width:3px;height:1px;background:#222222"></div>
<div class="a " style="left:2px;top:601px;width:82px;height:15px;background:#eeeeee"></div>
<div class="a " style="left:2px;top:601px;width:82px;height:1px;background:#7a8a99"></div>
<div class="a " style="left:2px;top:602px;width:82px;height:1px;background:#b8cfe5"></div>
<div class="a " style="left:2px;top:602px;width:15px;height:1px;background:#ffffff"></div>
<div class="a " style="left:2px;top:602px;width:1px;height:14px;background:#ffffff"></div>
<div class="a " style="left:7px;top:608px;width:1px;height:2px;background:#222222"></div>
<div class="a " style="left:8px;top:607px;width:1px;height:4px;background:#222222"></div>
<div class="a " style="left:9px;top:606px;width:1px;height:6px;background:#222222"></div>
<div class="a " style="left:10px;top:605px;width:1px;height:8px;background:#222222"></div>
<div class="a " style="left:68px;top:602px;width:1px;height:14px;background:#7a8a99"></div>
<div class="a " style="left:69px;top:602px;width:15px;height:1px;background:#ffffff"></div>
<div class="a " style="left:69px;top:602px;width:1px;height:14px;background:#ffffff"></div>
<div class="a " style="left:74px;top:605px;width:1px;height:8px;background:#222222"></div>
<div class="a " style="left:75px;top:606px;width:1px;height:6px;background:#222222"></div>
<div class="a " style="left:76px;top:607px;width:1px;height:4px;background:#222222"></div>
<div class="a " style="left:77px;top:608px;width:1px;height:2px;background:#222222"></div>
<div class="a " style="left:17px;top:601px;width:15px;height:15px;border:1px solid #6382bf;border-bottom:none;background:linear-gradient(#dde8f3 0%,#ffffff 30%,#dde8f3 60%,#b8cfe5 100%);box-shadow:inset 1px 1px 0 #ffffff"></div>
<div class="a " style="left:22px;top:605px;width:1px;height:9px;background:#6382bf"></div>
<div class="a " style="left:24px;top:605px;width:1px;height:9px;background:#6382bf"></div>
<div class="a " style="left:26px;top:605px;width:1px;height:9px;background:#6382bf"></div>
<div class="a " style="left:84px;top:601px;width:15px;height:15px;background:#eeeeee"></div>
<div class="a " style="left:84px;top:601px;width:1px;height:15px;background:#7a8a99"></div>
<div class="a " style="left:85px;top:601px;width:14px;height:1px;background:#ffffff"></div>
<svg style="left:104px;top:2px" width="5" height="614"><defs><pattern id="dp" x="0" y="0" width="5" height="4" patternUnits="userSpaceOnUse"><rect x="0" y="1" width="1" height="1" fill="#ffffff"/><rect x="1" y="2" width="1" height="1" fill="#7a8a99"/><rect x="2" y="3" width="1" height="1" fill="#ffffff"/><rect x="3" y="0" width="1" height="1" fill="#7a8a99"/></pattern></defs><rect x="0" y="1" width="5" height="612" fill="url(#dp)"/></svg>
<div class="a " style="left:110px;top:0px;width:1196px;height:1px;background:#7a8a99"></div>
<div class="a " style="left:110px;top:0px;width:1px;height:618px;background:#7a8a99"></div>
<div class="a " style="left:111px;top:1px;width:1195px;height:1px;background:#f6f6f6"></div>
<div class="a " style="left:1306px;top:0px;width:1px;height:619px;background:#fafafa"></div>
<div class="a " style="left:110px;top:618px;width:1197px;height:1px;background:#ffffff"></div>
<div class="t b" style="left:126px;top:13px;;transform:scaleX(1.1292)">Name</div>
<div class="a fld" style="left:193px;top:11px;width:306px;height:19px;"></div>
<div class="t " style="left:195px;top:13px;;transform:scaleX(0.9224)">VPLS_7</div>
<div class="t b" style="left:126px;top:42px;;transform:scaleX(1.066)">VPN OUI</div>
<div class="a fld" style="left:193px;top:40px;width:306px;height:19px;"></div>
<div class="t " style="left:195px;top:42px;;transform:scaleX(1.1063)">00000100000007</div>
<div class="t b" style="left:519px;top:13px;;transform:scaleX(1.1326)">Description</div>
<div class="a fld" style="left:630px;top:11px;width:298px;height:19px;"></div>
<div class="t b" style="left:519px;top:42px;;transform:scaleX(1.1181)">Service Profile</div>
<div class="a fld" style="left:630px;top:40px;width:298px;height:19px;"></div>
<div class="t " style="left:632px;top:42px;;transform:scaleX(0.969)">VPLS-var-PCP-crit</div>
<div class="t b" style="left:948px;top:13px;;transform:scaleX(1.1829)">Status</div>
<div class="a fld" style="left:1005px;top:11px;width:286px;height:19px;"></div>
<div class="t " style="left:1007px;top:13px;;transform:scaleX(1.0638)">Deployed Valid</div>
<div class="t i" style="left:126px;top:74px;;transform:scaleX(0.9364)">NEs</div>
<div class="a " style="left:158px;top:81px;width:1133px;height:1px;background:#6382bf"></div>
<div class="t i" style="left:126px;top:286px;;transform:scaleX(1.0271)">Pseudo Wires</div>
<div class="a " style="left:218px;top:293px;width:1073px;height:1px;background:#6382bf"></div>
<div class="a " style="left:126px;top:99px;width:1164px;height:154px;border:1px solid #7a8a99;background:#ffffff"></div>
<div class="a " style="left:1290px;top:99px;width:1px;height:155px;background:#ffffff"></div>
<div class="a " style="left:126px;top:253px;width:1165px;height:1px;background:#ffffff"></div>
<div class="a " style="left:127px;top:100px;width:127px;height:19px;background:#eeeeee;border-right:1px solid #7a8a99;border-bottom:1px solid #7a8a99;box-shadow:inset 1px 1px 0 #ffffff"></div>
<div class="a " style="left:127px;top:118px;width:1px;height:1px;background:#ffffff"></div>
<div class="t tc " style="left:129px;top:102px;width:125px;;transform:scaleX(1.0378)">Name</div>
<div class="a " style="left:254px;top:100px;width:128px;height:19px;background:#eeeeee;border-right:1px solid #7a8a99;border-bottom:1px solid #7a8a99;box-shadow:inset 1px 1px 0 #ffffff"></div>
<div class="a " style="left:254px;top:118px;width:1px;height:1px;background:#ffffff"></div>
<div class="t tc " style="left:256px;top:102px;width:126px;;transform:scaleX(0.9226)">SVI VLAN</div>
<div class="a " style="left:382px;top:100px;width:127px;height:19px;background:#eeeeee;border-right:1px solid #7a8a99;border-bottom:1px solid #7a8a99;box-shadow:inset 1px 1px 0 #ffffff"></div>
<div class="a " style="left:382px;top:118px;width:1px;height:1px;background:#ffffff"></div>
<div class="t tc " style="left:384px;top:102px;width:125px;;transform:scaleX(0.9827)">VLAN Name</div>
<div class="a " style="left:509px;top:100px;width:128px;height:19px;background:#eeeeee;border-right:1px solid #7a8a99;border-bottom:1px solid #7a8a99;box-shadow:inset 1px 1px 0 #ffffff"></div>
<div class="a " style="left:509px;top:118px;width:1px;height:1px;background:#ffffff"></div>
<div class="t tc " style="left:511px;top:102px;width:126px;;transform:scaleX(1.0093)">Role</div>
<div class="a " style="left:637px;top:100px;width:127px;height:19px;background:#eeeeee;border-right:1px solid #7a8a99;border-bottom:1px solid #7a8a99;box-shadow:inset 1px 1px 0 #ffffff"></div>
<div class="a " style="left:637px;top:118px;width:1px;height:1px;background:#ffffff"></div>
<div class="t tc " style="left:639px;top:102px;width:125px;;transform:scaleX(1.0444)">Primary Node</div>
<div class="a " style="left:764px;top:100px;width:128px;height:19px;background:#eeeeee;border-right:1px solid #7a8a99;border-bottom:1px solid #7a8a99;box-shadow:inset 1px 1px 0 #ffffff"></div>
<div class="a " style="left:764px;top:118px;width:1px;height:1px;background:#ffffff"></div>
<div class="t tc " style="left:766px;top:102px;width:126px;;transform:scaleX(1.0636)">Secondary Node</div>
<div class="a " style="left:892px;top:100px;width:127px;height:19px;background:#eeeeee;border-right:1px solid #7a8a99;border-bottom:1px solid #7a8a99;box-shadow:inset 1px 1px 0 #ffffff"></div>
<div class="a " style="left:892px;top:118px;width:1px;height:1px;background:#ffffff"></div>
<div class="t tc " style="left:894px;top:102px;width:125px;;transform:scaleX(1.05)">Service Profile</div>
<div class="a " style="left:1019px;top:100px;width:128px;height:19px;background:#eeeeee;border-right:1px solid #7a8a99;border-bottom:1px solid #7a8a99;box-shadow:inset 1px 1px 0 #ffffff"></div>
<div class="a " style="left:1019px;top:118px;width:1px;height:1px;background:#ffffff"></div>
<div class="t tc " style="left:1021px;top:102px;width:126px;;transform:scaleX(1.1123)">Status</div>
<div class="a " style="left:1147px;top:100px;width:127px;height:19px;background:#eeeeee;border-right:1px solid #7a8a99;border-bottom:1px solid #7a8a99;box-shadow:inset 1px 1px 0 #ffffff"></div>
<div class="a " style="left:1147px;top:118px;width:1px;height:1px;background:#ffffff"></div>
<div class="t tc " style="left:1149px;top:102px;width:125px;;transform:scaleX(1.0609)">Conflict</div>
<div class="a " style="left:1274px;top:100px;width:15px;height:19px;background:linear-gradient(#dde8f3 0%,#ffffff 30%,#dde8f3 60%,#b8cfe5 100%);border:1px solid #7a8a99;box-shadow:inset 1px 1px 0 #ffffff"></div>
<div class="a " style="left:1277px;top:103px;width:2px;height:12px;background:#000000"></div>
<div class="a " style="left:1281px;top:103px;width:2px;height:12px;background:#000000"></div>
<div class="a " style="left:1285px;top:103px;width:2px;height:12px;background:#000000"></div>
<div class="a" style="left:127px;top:119px;width:1147px;height:133px;overflow:hidden;background:#ffffff">
<div class="a " style="left:1px;top:0px;width:1146px;height:80px;background:#e6e6e6"></div>
<div class="a " style="left:1px;top:19px;width:1146px;height:1px;background:#f0f0f0"></div>
<div class="a " style="left:1px;top:39px;width:1146px;height:1px;background:#f0f0f0"></div>
<div class="a " style="left:1px;top:59px;width:1146px;height:1px;background:#f0f0f0"></div>
<div class="a " style="left:1px;top:79px;width:1146px;height:1px;background:#f0f0f0"></div>
<div class="a " style="left:1px;top:99px;width:1146px;height:1px;background:#eeeeee"></div>
<div class="a " style="left:1px;top:119px;width:1146px;height:1px;background:#eeeeee"></div>
<div class="a " style="left:1px;top:139px;width:1146px;height:1px;background:#eeeeee"></div>
<div class="a " style="left:126px;top:0px;width:1px;height:133px;background:#eeeeee"></div>
<div class="a " style="left:126px;top:0px;width:1px;height:80px;background:#f0f0f0"></div>
<div class="a " style="left:254px;top:0px;width:1px;height:133px;background:#eeeeee"></div>
<div class="a " style="left:254px;top:0px;width:1px;height:80px;background:#f0f0f0"></div>
<div class="a " style="left:381px;top:0px;width:1px;height:133px;background:#eeeeee"></div>
<div class="a " style="left:381px;top:0px;width:1px;height:80px;background:#f0f0f0"></div>
<div class="a " style="left:509px;top:0px;width:1px;height:133px;background:#eeeeee"></div>
<div class="a " style="left:509px;top:0px;width:1px;height:80px;background:#f0f0f0"></div>
<div class="a " style="left:636px;top:0px;width:1px;height:133px;background:#eeeeee"></div>
<div class="a " style="left:636px;top:0px;width:1px;height:80px;background:#f0f0f0"></div>
<div class="a " style="left:764px;top:0px;width:1px;height:133px;background:#eeeeee"></div>
<div class="a " style="left:764px;top:0px;width:1px;height:80px;background:#f0f0f0"></div>
<div class="a " style="left:891px;top:0px;width:1px;height:133px;background:#eeeeee"></div>
<div class="a " style="left:891px;top:0px;width:1px;height:80px;background:#f0f0f0"></div>
<div class="a " style="left:1019px;top:0px;width:1px;height:133px;background:#eeeeee"></div>
<div class="a " style="left:1019px;top:0px;width:1px;height:80px;background:#f0f0f0"></div>
<div class="a " style="left:1146px;top:0px;width:1px;height:133px;background:#eeeeee"></div>
<div class="a " style="left:1146px;top:0px;width:1px;height:80px;background:#f0f0f0"></div>
<div class="a " style="left:1px;top:0px;width:15px;height:20px;background:#eeeeee"></div>
<svg style="left:6px;top:6px" width="10" height="6" viewBox="0 0 10 6"><circle cx="3" cy="3" r="2" fill="#fff" stroke="#4a6fc0" stroke-width="2"/><rect x="5.6" y="2" width="4.4" height="2" fill="#4a6fc0"/></svg>
<div class="t " style="left:18px;top:2px;;transform:scaleX(0.9811)">NE_80</div>
<div class="t tr " style="left:127px;top:2px;width:126px;;transform:scaleX(1.1058)">888</div>
<div class="t " style="left:255.5px;top:2px;;transform:scaleX(0.9754)">VLAN-888 (VLAN_...</div>
<div class="t " style="left:382.5px;top:2px;;transform:scaleX(1.0478)">Hub</div>
<div class="t " style="left:765.5px;top:2px;;transform:scaleX(0.969)">VPLS-var-PCP-crit</div>
<div class="t " style="left:892.5px;top:2px;;transform:scaleX(1.0638)">Deployed Valid</div>
<div class="a " style="left:1077px;top:3px;width:13px;height:13px;border:1px solid #7a8a99;background:linear-gradient(#eaf1f8 0%,#ffffff 25%,#dbe7f3 60%,#c3d7eb 100%);box-shadow:0 0 0 1px #ececec"></div>
<div class="a " style="left:1px;top:20px;width:15px;height:20px;background:#eeeeee"></div>
<svg style="left:6px;top:26px" width="10" height="6" viewBox="0 0 10 6"><circle cx="3" cy="3" r="2" fill="#fff" stroke="#4a6fc0" stroke-width="2"/><rect x="5.6" y="2" width="4.4" height="2" fill="#4a6fc0"/></svg>
<div class="t " style="left:18px;top:22px;;transform:scaleX(0.9811)">NE_82</div>
<div class="t tr " style="left:127px;top:22px;width:126px;;transform:scaleX(1.1058)">888</div>
<div class="t " style="left:255.5px;top:22px;;transform:scaleX(0.9754)">VLAN-888 (VLAN_...</div>
<div class="t " style="left:382.5px;top:22px;;transform:scaleX(1.0478)">Hub</div>
<div class="t " style="left:765.5px;top:22px;;transform:scaleX(0.969)">VPLS-var-PCP-crit</div>
<div class="t " style="left:892.5px;top:22px;;transform:scaleX(1.0638)">Deployed Valid</div>
<div class="a " style="left:1077px;top:23px;width:13px;height:13px;border:1px solid #7a8a99;background:linear-gradient(#eaf1f8 0%,#ffffff 25%,#dbe7f3 60%,#c3d7eb 100%);box-shadow:0 0 0 1px #ececec"></div>
<div class="a " style="left:1px;top:40px;width:15px;height:20px;background:#eeeeee"></div>
<svg style="left:6px;top:46px" width="10" height="6" viewBox="0 0 10 6"><circle cx="3" cy="3" r="2" fill="#fff" stroke="#4a6fc0" stroke-width="2"/><rect x="5.6" y="2" width="4.4" height="2" fill="#4a6fc0"/></svg>
<div class="t " style="left:18px;top:42px;;transform:scaleX(0.9811)">NE_83</div>
<div class="t tr " style="left:127px;top:42px;width:126px;;transform:scaleX(1.1058)">888</div>
<div class="t " style="left:255.5px;top:42px;;transform:scaleX(0.9754)">VLAN-888 (VLAN_...</div>
<div class="t " style="left:382.5px;top:42px;;transform:scaleX(1.0478)">Hub</div>
<div class="t " style="left:765.5px;top:42px;;transform:scaleX(0.969)">VPLS-var-PCP-crit</div>
<div class="t " style="left:892.5px;top:42px;;transform:scaleX(1.0638)">Deployed Valid</div>
<div class="a " style="left:1077px;top:43px;width:13px;height:13px;border:1px solid #7a8a99;background:linear-gradient(#eaf1f8 0%,#ffffff 25%,#dbe7f3 60%,#c3d7eb 100%);box-shadow:0 0 0 1px #ececec"></div>
<div class="a " style="left:1px;top:60px;width:15px;height:20px;background:#eeeeee"></div>
<svg style="left:6px;top:66px" width="10" height="6" viewBox="0 0 10 6"><circle cx="3" cy="3" r="2" fill="#fff" stroke="#4a6fc0" stroke-width="2"/><rect x="5.6" y="2" width="4.4" height="2" fill="#4a6fc0"/></svg>
<div class="t " style="left:18px;top:62px;;transform:scaleX(0.9811)">NE_81</div>
<div class="t tr " style="left:127px;top:62px;width:126px;;transform:scaleX(1.1058)">888</div>
<div class="t " style="left:255.5px;top:62px;;transform:scaleX(0.9754)">VLAN-888 (VLAN_...</div>
<div class="t " style="left:382.5px;top:62px;;transform:scaleX(1.0478)">Hub</div>
<div class="t " style="left:765.5px;top:62px;;transform:scaleX(0.969)">VPLS-var-PCP-crit</div>
<div class="t " style="left:892.5px;top:62px;;transform:scaleX(1.0638)">Deployed Valid</div>
<div class="a " style="left:1077px;top:63px;width:13px;height:13px;border:1px solid #7a8a99;background:linear-gradient(#eaf1f8 0%,#ffffff 25%,#dbe7f3 60%,#c3d7eb 100%);box-shadow:0 0 0 1px #ececec"></div>
</div>
<div class="a " style="left:1274px;top:118px;width:15px;height:134px;background:#eeeeee"></div>
<div class="a " style="left:1274px;top:118px;width:1px;height:134px;background:#7a8a99"></div>
<div class="a " style="left:1275px;top:119px;width:14px;height:1px;background:#ffffff"></div>
<div class="a " style="left:1275px;top:119px;width:1px;height:15px;background:#ffffff"></div>
<div class="a " style="left:1276px;top:134px;width:13px;height:1px;background:#7a8a99"></div>
<div class="a " style="left:1281px;top:124px;width:1px;height:1px;background:#222222"></div>
<div class="a " style="left:1280px;top:125px;width:3px;height:1px;background:#222222"></div>
<div class="a " style="left:1279px;top:126px;width:5px;height:1px;background:#222222"></div>
<div class="a " style="left:1278px;top:127px;width:7px;height:1px;background:#222222"></div>
<div class="a " style="left:1275px;top:135px;width:14px;height:1px;background:#b8cfe5"></div>
<div class="a " style="left:1275px;top:135px;width:1px;height:101px;background:#b8cfe5"></div>
<div class="a " style="left:1276px;top:236px;width:13px;height:1px;background:#7a8a99"></div>
<div class="a " style="left:1275px;top:237px;width:14px;height:1px;background:#ffffff"></div>
<div class="a " style="left:1275px;top:237px;width:1px;height:14px;background:#ffffff"></div>
<div class="a " style="left:1276px;top:251px;width:13px;height:1px;background:#7a8a99"></div>
<div class="a " style="left:1277px;top:242px;width:9px;height:1px;background:#222222"></div>
<div class="a " style="left:1278px;top:243px;width:7px;height:1px;background:#222222"></div>
<div class="a " style="left:1279px;top:244px;width:5px;height:1px;background:#222222"></div>
<div class="a " style="left:1280px;top:245px;width:3px;height:1px;background:#222222"></div>
<div class="a " style="left:126px;top:306px;width:1164px;height:279px;border:1px solid #7a8a99;background:#ffffff"></div>
<div class="a " style="left:1290px;top:306px;width:1px;height:280px;background:#ffffff"></div>
<div class="a " style="left:126px;top:585px;width:1165px;height:1px;background:#ffffff"></div>
<div class="a " style="left:127px;top:307px;width:75px;height:19px;background:#eeeeee;border-right:1px solid #7a8a99;border-bottom:1px solid #7a8a99;box-shadow:inset 1px 1px 0 #ffffff"></div>
<div class="a " style="left:127px;top:325px;width:1px;height:1px;background:#ffffff"></div>
<div class="t tc " style="left:129px;top:309px;width:73px;;transform:scaleX(1.0378)">Name</div>
<div class="a " style="left:202px;top:307px;width:75px;height:19px;background:#eeeeee;border-right:1px solid #7a8a99;border-bottom:1px solid #7a8a99;box-shadow:inset 1px 1px 0 #ffffff"></div>
<div class="a " style="left:202px;top:325px;width:1px;height:1px;background:#ffffff"></div>
<div class="t tc " style="left:204px;top:309px;width:73px;;transform:scaleX(1.0918)">Description</div>
<div class="a " style="left:277px;top:307px;width:75px;height:19px;background:#eeeeee;border-right:1px solid #7a8a99;border-bottom:1px solid #7a8a99;box-shadow:inset 1px 1px 0 #ffffff"></div>
<div class="a " style="left:277px;top:325px;width:1px;height:1px;background:#ffffff"></div>
<div class="t tc " style="left:279px;top:309px;width:73px;;transform:scaleX(1.1257)">Initiator</div>
<div class="a " style="left:352px;top:307px;width:75px;height:19px;background:#eeeeee;border-right:1px solid #7a8a99;border-bottom:1px solid #7a8a99;box-shadow:inset 1px 1px 0 #ffffff"></div>
<div class="a " style="left:352px;top:325px;width:1px;height:1px;background:#ffffff"></div>
<div class="t tc " style="left:354px;top:309px;width:73px;;transform:scaleX(1.1068)">Terminator</div>
<div class="a " style="left:427px;top:307px;width:91px;height:19px;background:#eeeeee;border-right:1px solid #7a8a99;border-bottom:1px solid #7a8a99;box-shadow:inset 1px 1px 0 #ffffff"></div>
<div class="a " style="left:427px;top:325px;width:1px;height:1px;background:#ffffff"></div>
<div class="t tc " style="left:429px;top:309px;width:89px;;transform:scaleX(1.0688)">Tunnel</div>
<div class="a " style="left:518px;top:307px;width:75px;height:19px;background:#eeeeee;border-right:1px solid #7a8a99;border-bottom:1px solid #7a8a99;box-shadow:inset 1px 1px 0 #ffffff"></div>
<div class="a " style="left:518px;top:325px;width:1px;height:1px;background:#ffffff"></div>
<div class="t tc " style="left:520px;top:309px;width:73px;;transform:scaleX(1.0785)">BW [kbit/s]</div>
<div class="a " style="left:593px;top:307px;width:75px;height:19px;background:#eeeeee;border-right:1px solid #7a8a99;border-bottom:1px solid #7a8a99;box-shadow:inset 1px 1px 0 #ffffff"></div>
<div class="a " style="left:593px;top:325px;width:1px;height:1px;background:#ffffff"></div>
<div class="t tc " style="left:595px;top:309px;width:73px;;transform:scaleX(1.0144)">Class-Type</div>
<div class="a " style="left:668px;top:307px;width:119px;height:19px;background:#eeeeee;border-right:1px solid #7a8a99;border-bottom:1px solid #7a8a99;box-shadow:inset 1px 1px 0 #ffffff"></div>
<div class="a " style="left:668px;top:325px;width:1px;height:1px;background:#ffffff"></div>
<div class="t tc " style="left:670px;top:309px;width:117px;;transform:scaleX(1.0427)">Dual-Home Group</div>
<div class="a " style="left:787px;top:307px;width:109px;height:19px;background:#eeeeee;border-right:1px solid #7a8a99;border-bottom:1px solid #7a8a99;box-shadow:inset 1px 1px 0 #ffffff"></div>
<div class="a " style="left:787px;top:325px;width:1px;height:1px;background:#ffffff"></div>
<div class="t tc " style="left:789px;top:309px;width:107px;;transform:scaleX(1.0302)">Dual-Home Role</div>
<div class="a " style="left:896px;top:307px;width:116px;height:19px;background:#eeeeee;border-right:1px solid #7a8a99;border-bottom:1px solid #7a8a99;box-shadow:inset 1px 1px 0 #ffffff"></div>
<div class="a " style="left:896px;top:325px;width:1px;height:1px;background:#ffffff"></div>
<div class="t tc " style="left:898px;top:309px;width:114px;;transform:scaleX(1.1123)">Status</div>
<div class="a " style="left:1012px;top:307px;width:112px;height:19px;background:#eeeeee;border-right:1px solid #7a8a99;border-bottom:1px solid #7a8a99;box-shadow:inset 1px 1px 0 #ffffff"></div>
<div class="a " style="left:1012px;top:325px;width:1px;height:1px;background:#ffffff"></div>
<div class="t tc " style="left:1014px;top:309px;width:110px;;transform:scaleX(1.0909)">Tunnel Status</div>
<div class="a " style="left:1124px;top:307px;width:75px;height:19px;background:#eeeeee;border-right:1px solid #7a8a99;border-bottom:1px solid #7a8a99;box-shadow:inset 1px 1px 0 #ffffff"></div>
<div class="a " style="left:1124px;top:325px;width:1px;height:1px;background:#ffffff"></div>
<div class="t tc " style="left:1126px;top:309px;width:73px;;transform:scaleX(1.0538)">Admin St...</div>
<div class="a " style="left:1199px;top:307px;width:75px;height:19px;background:#eeeeee;border-right:1px solid #7a8a99;border-bottom:1px solid #7a8a99;box-shadow:inset 1px 1px 0 #ffffff"></div>
<div class="a " style="left:1199px;top:325px;width:1px;height:1px;background:#ffffff"></div>
<div class="t tc " style="left:1201px;top:309px;width:73px;;transform:scaleX(1.0859)">Operation</div>
<div class="a " style="left:1274px;top:307px;width:15px;height:19px;background:linear-gradient(#dde8f3 0%,#ffffff 30%,#dde8f3 60%,#b8cfe5 100%);border:1px solid #7a8a99;box-shadow:inset 1px 1px 0 #ffffff"></div>
<div class="a " style="left:1277px;top:310px;width:2px;height:12px;background:#000000"></div>
<div class="a " style="left:1281px;top:310px;width:2px;height:12px;background:#000000"></div>
<div class="a " style="left:1285px;top:310px;width:2px;height:12px;background:#000000"></div>
<div class="a" style="left:127px;top:326px;width:1147px;height:258px;overflow:hidden;background:#ffffff">
<div class="a " style="left:1px;top:0px;width:1146px;height:120px;background:#e6e6e6"></div>
<div class="a " style="left:1px;top:19px;width:1146px;height:1px;background:#f0f0f0"></div>
<div class="a " style="left:1px;top:39px;width:1146px;height:1px;background:#f0f0f0"></div>
<div class="a " style="left:1px;top:59px;width:1146px;height:1px;background:#f0f0f0"></div>
<div class="a " style="left:1px;top:79px;width:1146px;height:1px;background:#f0f0f0"></div>
<div class="a " style="left:1px;top:99px;width:1146px;height:1px;background:#f0f0f0"></div>
<div class="a " style="left:1px;top:119px;width:1146px;height:1px;background:#f0f0f0"></div>
<div class="a " style="left:1px;top:139px;width:1146px;height:1px;background:#eeeeee"></div>
<div class="a " style="left:1px;top:159px;width:1146px;height:1px;background:#eeeeee"></div>
<div class="a " style="left:1px;top:179px;width:1146px;height:1px;background:#eeeeee"></div>
<div class="a " style="left:1px;top:199px;width:1146px;height:1px;background:#eeeeee"></div>
<div class="a " style="left:1px;top:219px;width:1146px;height:1px;background:#eeeeee"></div>
<div class="a " style="left:1px;top:239px;width:1146px;height:1px;background:#eeeeee"></div>
<div class="a " style="left:1px;top:259px;width:1146px;height:1px;background:#eeeeee"></div>
<div class="a " style="left:74px;top:0px;width:1px;height:258px;background:#eeeeee"></div>
<div class="a " style="left:74px;top:0px;width:1px;height:120px;background:#f0f0f0"></div>
<div class="a " style="left:149px;top:0px;width:1px;height:258px;background:#eeeeee"></div>
<div class="a " style="left:149px;top:0px;width:1px;height:120px;background:#f0f0f0"></div>
<div class="a " style="left:224px;top:0px;width:1px;height:258px;background:#eeeeee"></div>
<div class="a " style="left:224px;top:0px;width:1px;height:120px;background:#f0f0f0"></div>
<div class="a " style="left:299px;top:0px;width:1px;height:258px;background:#eeeeee"></div>
<div class="a " style="left:299px;top:0px;width:1px;height:120px;background:#f0f0f0"></div>
<div class="a " style="left:390px;top:0px;width:1px;height:258px;background:#eeeeee"></div>
<div class="a " style="left:390px;top:0px;width:1px;height:120px;background:#f0f0f0"></div>
<div class="a " style="left:465px;top:0px;width:1px;height:258px;background:#eeeeee"></div>
<div class="a " style="left:465px;top:0px;width:1px;height:120px;background:#f0f0f0"></div>
<div class="a " style="left:540px;top:0px;width:1px;height:258px;background:#eeeeee"></div>
<div class="a " style="left:540px;top:0px;width:1px;height:120px;background:#f0f0f0"></div>
<div class="a " style="left:659px;top:0px;width:1px;height:258px;background:#eeeeee"></div>
<div class="a " style="left:659px;top:0px;width:1px;height:120px;background:#f0f0f0"></div>
<div class="a " style="left:768px;top:0px;width:1px;height:258px;background:#eeeeee"></div>
<div class="a " style="left:768px;top:0px;width:1px;height:120px;background:#f0f0f0"></div>
<div class="a " style="left:884px;top:0px;width:1px;height:258px;background:#eeeeee"></div>
<div class="a " style="left:884px;top:0px;width:1px;height:120px;background:#f0f0f0"></div>
<div class="a " style="left:996px;top:0px;width:1px;height:258px;background:#eeeeee"></div>
<div class="a " style="left:996px;top:0px;width:1px;height:120px;background:#f0f0f0"></div>
<div class="a " style="left:1071px;top:0px;width:1px;height:258px;background:#eeeeee"></div>
<div class="a " style="left:1071px;top:0px;width:1px;height:120px;background:#f0f0f0"></div>
<div class="a " style="left:1146px;top:0px;width:1px;height:258px;background:#eeeeee"></div>
<div class="a " style="left:1146px;top:0px;width:1px;height:120px;background:#f0f0f0"></div>
<div class="t " style="left:0.5px;top:2px;;transform:scaleX(0.9589)">VPLS_7_p...</div>
<div class="t " style="left:150.5px;top:2px;;transform:scaleX(0.9811)">NE_80</div>
<div class="t " style="left:225.5px;top:2px;;transform:scaleX(0.9811)">NE_81</div>
<div class="t " style="left:300.5px;top:2px;;transform:scaleX(1.0061)">VPLS_15758...</div>
<div class="t tr " style="left:391px;top:2px;width:73px;;transform:scaleX(1.1065)">10,000</div>
<div class="a " style="left:466px;top:0px;width:74px;height:19px;background:#fb002d"></div>
<div class="t " style="left:466.5px;top:2px;color:#ffffff;transform:scaleX(1.0308)">Mission C...</div>
<div class="t " style="left:769.5px;top:2px;;transform:scaleX(1.0638)">Deployed Valid</div>
<div class="t " style="left:885.5px;top:2px;;transform:scaleX(1.0638)">Deployed Valid</div>
<div class="t tc " style="left:997px;top:2px;width:74px;;transform:scaleX(1.0226)">Up</div>
<div class="t " style="left:0.5px;top:22px;;transform:scaleX(0.9589)">VPLS_7_p...</div>
<div class="t " style="left:150.5px;top:22px;;transform:scaleX(0.9811)">NE_80</div>
<div class="t " style="left:225.5px;top:22px;;transform:scaleX(0.9811)">NE_83</div>
<div class="t " style="left:300.5px;top:22px;;transform:scaleX(1.0061)">VPLS_15758...</div>
<div class="t tr " style="left:391px;top:22px;width:73px;;transform:scaleX(1.1065)">10,000</div>
<div class="a " style="left:466px;top:20px;width:74px;height:19px;background:#fb002d"></div>
<div class="t " style="left:466.5px;top:22px;color:#ffffff;transform:scaleX(1.0308)">Mission C...</div>
<div class="t " style="left:769.5px;top:22px;;transform:scaleX(1.0638)">Deployed Valid</div>
<div class="t " style="left:885.5px;top:22px;;transform:scaleX(1.0638)">Deployed Valid</div>
<div class="t tc " style="left:997px;top:22px;width:74px;;transform:scaleX(1.0226)">Up</div>
<div class="t " style="left:0.5px;top:42px;;transform:scaleX(0.9589)">VPLS_7_p...</div>
<div class="t " style="left:150.5px;top:42px;;transform:scaleX(0.9811)">NE_80</div>
<div class="t " style="left:225.5px;top:42px;;transform:scaleX(0.9811)">NE_82</div>
<div class="t " style="left:300.5px;top:42px;;transform:scaleX(1.0061)">VPLS_15758...</div>
<div class="t tr " style="left:391px;top:42px;width:73px;;transform:scaleX(1.1065)">10,000</div>
<div class="a " style="left:466px;top:40px;width:74px;height:19px;background:#fb002d"></div>
<div class="t " style="left:466.5px;top:42px;color:#ffffff;transform:scaleX(1.0308)">Mission C...</div>
<div class="t " style="left:769.5px;top:42px;;transform:scaleX(1.0638)">Deployed Valid</div>
<div class="t " style="left:885.5px;top:42px;;transform:scaleX(1.0638)">Deployed Valid</div>
<div class="t tc " style="left:997px;top:42px;width:74px;;transform:scaleX(1.0226)">Up</div>
<div class="t " style="left:0.5px;top:62px;;transform:scaleX(0.9589)">VPLS_7_p...</div>
<div class="t " style="left:150.5px;top:62px;;transform:scaleX(0.9811)">NE_82</div>
<div class="t " style="left:225.5px;top:62px;;transform:scaleX(0.9811)">NE_81</div>
<div class="t " style="left:300.5px;top:62px;;transform:scaleX(1.0061)">VPLS_15758...</div>
<div class="t tr " style="left:391px;top:62px;width:73px;;transform:scaleX(1.1065)">10,000</div>
<div class="a " style="left:466px;top:60px;width:74px;height:19px;background:#fb002d"></div>
<div class="t " style="left:466.5px;top:62px;color:#ffffff;transform:scaleX(1.0308)">Mission C...</div>
<div class="t " style="left:769.5px;top:62px;;transform:scaleX(1.0638)">Deployed Valid</div>
<div class="t " style="left:885.5px;top:62px;;transform:scaleX(1.0638)">Deployed Valid</div>
<div class="t tc " style="left:997px;top:62px;width:74px;;transform:scaleX(1.0226)">Up</div>
<div class="t " style="left:0.5px;top:82px;;transform:scaleX(0.9589)">VPLS_7_p...</div>
<div class="t " style="left:150.5px;top:82px;;transform:scaleX(0.9811)">NE_82</div>
<div class="t " style="left:225.5px;top:82px;;transform:scaleX(0.9811)">NE_83</div>
<div class="t " style="left:300.5px;top:82px;;transform:scaleX(1.0061)">VPLS_15758...</div>
<div class="t tr " style="left:391px;top:82px;width:73px;;transform:scaleX(1.1065)">10,000</div>
<div class="a " style="left:466px;top:80px;width:74px;height:19px;background:#fb002d"></div>
<div class="t " style="left:466.5px;top:82px;color:#ffffff;transform:scaleX(1.0308)">Mission C...</div>
<div class="t " style="left:769.5px;top:82px;;transform:scaleX(1.0638)">Deployed Valid</div>
<div class="t " style="left:885.5px;top:82px;;transform:scaleX(1.0638)">Deployed Valid</div>
<div class="t tc " style="left:997px;top:82px;width:74px;;transform:scaleX(1.0226)">Up</div>
<div class="t " style="left:0.5px;top:102px;;transform:scaleX(0.9589)">VPLS_7_p...</div>
<div class="t " style="left:150.5px;top:102px;;transform:scaleX(0.9811)">NE_83</div>
<div class="t " style="left:225.5px;top:102px;;transform:scaleX(0.9811)">NE_81</div>
<div class="t " style="left:300.5px;top:102px;;transform:scaleX(1.0061)">VPLS_15758...</div>
<div class="t tr " style="left:391px;top:102px;width:73px;;transform:scaleX(1.1065)">10,000</div>
<div class="a " style="left:466px;top:100px;width:74px;height:19px;background:#fb002d"></div>
<div class="t " style="left:466.5px;top:102px;color:#ffffff;transform:scaleX(1.0308)">Mission C...</div>
<div class="t " style="left:769.5px;top:102px;;transform:scaleX(1.0638)">Deployed Valid</div>
<div class="t " style="left:885.5px;top:102px;;transform:scaleX(1.0638)">Deployed Valid</div>
<div class="t tc " style="left:997px;top:102px;width:74px;;transform:scaleX(1.0226)">Up</div>
</div>
<div class="a " style="left:1274px;top:325px;width:15px;height:259px;background:#eeeeee"></div>
<div class="a " style="left:1274px;top:325px;width:1px;height:259px;background:#7a8a99"></div>
<div class="a " style="left:1275px;top:326px;width:14px;height:1px;background:#ffffff"></div>
<div class="a " style="left:1275px;top:326px;width:1px;height:15px;background:#ffffff"></div>
<div class="a " style="left:1276px;top:341px;width:13px;height:1px;background:#7a8a99"></div>
<div class="a " style="left:1281px;top:331px;width:1px;height:1px;background:#222222"></div>
<div class="a " style="left:1280px;top:332px;width:3px;height:1px;background:#222222"></div>
<div class="a " style="left:1279px;top:333px;width:5px;height:1px;background:#222222"></div>
<div class="a " style="left:1278px;top:334px;width:7px;height:1px;background:#222222"></div>
<div class="a " style="left:1275px;top:342px;width:14px;height:1px;background:#b8cfe5"></div>
<div class="a " style="left:1275px;top:342px;width:1px;height:226px;background:#b8cfe5"></div>
<div class="a " style="left:1276px;top:568px;width:13px;height:1px;background:#7a8a99"></div>
<div class="a " style="left:1275px;top:569px;width:14px;height:1px;background:#ffffff"></div>
<div class="a " style="left:1275px;top:569px;width:1px;height:14px;background:#ffffff"></div>
<div class="a " style="left:1276px;top:583px;width:13px;height:1px;background:#7a8a99"></div>
<div class="a " style="left:1277px;top:574px;width:9px;height:1px;background:#222222"></div>
<div class="a " style="left:1278px;top:575px;width:7px;height:1px;background:#222222"></div>
<div class="a " style="left:1279px;top:576px;width:5px;height:1px;background:#222222"></div>
<div class="a " style="left:1280px;top:577px;width:3px;height:1px;background:#222222"></div>
<div class="t b" style="left:126px;top:259px;;transform:scaleX(1.1362)">Entries:</div>
<div class="t " style="left:184px;top:259px;;transform:scaleX(1.128)">Total</div>
<div class="a wf" style="left:218px;top:257px;width:48px;height:19px;"></div>
<div class="t tr " style="left:218px;top:259px;width:44px;;transform:scaleX(1.1058)">4</div>
<div class="t " style="left:274px;top:259px;;transform:scaleX(1.084)">Filtered</div>
<div class="a wf" style="left:324px;top:257px;width:48px;height:19px;"></div>
<div class="t tr " style="left:324px;top:259px;width:44px;;transform:scaleX(1.1058)">4</div>
<div class="t " style="left:380px;top:259px;;transform:scaleX(1.0871)">Selected</div>
<div class="a wf" style="left:438px;top:257px;width:48px;height:19px;"></div>
<div class="t tr " style="left:438px;top:259px;width:44px;;transform:scaleX(1.1058)">0</div>
<div class="t b" style="left:126px;top:591px;;transform:scaleX(1.1362)">Entries:</div>
<div class="t " style="left:184px;top:591px;;transform:scaleX(1.128)">Total</div>
<div class="a wf" style="left:218px;top:589px;width:48px;height:19px;"></div>
<div class="t tr " style="left:218px;top:591px;width:44px;;transform:scaleX(1.1058)">6</div>
<div class="t " style="left:274px;top:591px;;transform:scaleX(1.084)">Filtered</div>
<div class="a wf" style="left:324px;top:589px;width:48px;height:19px;"></div>
<div class="t tr " style="left:324px;top:591px;width:44px;;transform:scaleX(1.1058)">6</div>
<div class="t " style="left:380px;top:591px;;transform:scaleX(1.0871)">Selected</div>
<div class="a wf" style="left:438px;top:589px;width:48px;height:19px;"></div>
<div class="t tr " style="left:438px;top:591px;width:44px;;transform:scaleX(1.1058)">0</div>
<div class="a btn" style="left:6px;top:625px;width:86px;height:26px;"></div>
<div class="t " style="left:26px;top:631px;font-size:17px;color:#000;-webkit-text-stroke:0.4px #000;transform:scaleX(1.0)">?</div>
<div class="t b" style="left:43px;top:631px;;transform:scaleX(1.1359)"><span class="u">H</span>elp</div>
<div class="a btn" style="left:814px;top:625px;width:81px;height:26px;"></div>
<div class="t b" style="left:851px;top:631px;;transform:scaleX(1.0992)"><span class="u">E</span>dit</div>
<div class="a " style="left:833px;top:632px;width:1px;height:12px;background:#000"></div>
<div class="a " style="left:833px;top:632px;width:3px;height:1px;background:#000"></div>
<div class="a " style="left:833px;top:643px;width:3px;height:1px;background:#000"></div>
<div class="a " style="left:836px;top:640px;width:2px;height:2px;background:#ff0000"></div>
<div class="a " style="left:840px;top:640px;width:2px;height:2px;background:#ff0000"></div>
<div class="a " style="left:844px;top:640px;width:2px;height:2px;background:#ff0000"></div>
<div class="a " style="left:905px;top:625px;width:103px;height:26px;border:1px solid #999999;background:#eeeeee"></div>
<div class="t b" style="left:942px;top:631px;color:#999999;transform:scaleX(1.1305)"><span class="u">D</span>eploy</div>
<svg style="left:924px;top:629px" width="12" height="18" viewBox="0 0 12 18"><polygon points="2.9,1.2 7.6,1.2 6.4,4.9 10.1,5.2 4.2,16.9 5.1,9.1 1.0,8.6" fill="#b0b0b0"/></svg>
<div class="a btn" style="left:1018px;top:626px;width:69px;height:25px;"></div>
<div class="t tc b" style="left:1018px;top:631px;width:69px;;transform:scaleX(1.0769)">Align</div>
<div class="a btn" style="left:1097px;top:625px;width:101px;height:26px;"></div>
<div class="t b" style="left:1134px;top:631px;;transform:scaleX(1.2042)"><span class="u">D</span>elete</div>
<svg style="left:1117px;top:632px" width="10" height="13" viewBox="0 0 10 13"><rect x="3" y="0" width="4" height="1" fill="#111" opacity="0.75"/><rect x="0" y="1" width="10" height="2" fill="#0a0a0a"/><path d="M0.5 4 H9.5 V12.7 H0.5 Z M2 6 V11 H4 V6 Z M6 6 V11 H8 V6 Z" fill="#0a0a0a" fill-rule="evenodd"/><rect x="2" y="6" width="2" height="5" fill="#111" opacity="0.22"/><rect x="6" y="6" width="2" height="5" fill="#111" opacity="0.22"/></svg>
<div class="a btn" style="left:1208px;top:625px;width:93px;height:26px;"></div>
<div class="t b" style="left:1245px;top:631px;;transform:scaleX(1.1015)"><span class="u">C</span>lose</div>
<svg style="left:1226px;top:631px" width="14" height="14" viewBox="0 0 14 14"><circle cx="7" cy="7" r="7" fill="#111"/><path d="M4.1 4.1 L9.9 9.9 M9.9 4.1 L4.1 9.9" stroke="#fff" stroke-width="1.7" stroke-linecap="round"/></svg>
</div></body></html>
